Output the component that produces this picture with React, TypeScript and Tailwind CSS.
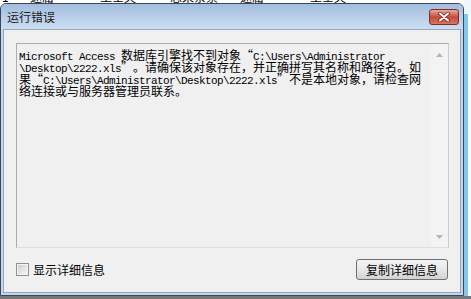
import React from "react";

const CJK = "font-['Noto_Sans_CJK_SC',sans-serif] text-[12px]";
const LAT = "font-['Liberation_Mono',monospace] text-[11px] tracking-[-0.6px]";

function L({ t }: { t: string }) {
  return <span className={LAT}>{t}</span>;
}
function C({ t }: { t: string }) {
  return <span className={CJK}>{t}</span>;
}
function LQ() {
  return <span className={`${CJK} inline-block w-[12px] text-right`}>“</span>;
}
function RQ() {
  return <span className={`${CJK} inline-block w-[12px] text-left`}>”</span>;
}

function Line({ children }: { children: React.ReactNode }) {
  return <div className="h-[12px] leading-[12px] whitespace-pre text-black">{children}</div>;
}

function Tri({ down }: { down?: boolean }) {
  return (
    <svg width="7" height="4" viewBox="0 0 7 4">
      {down ? <path d="M0 0 L7 0 L3.5 4 Z" fill="#b4b4b4" /> : <path d="M0 4 L7 4 L3.5 0 Z" fill="#b4b4b4" />}
    </svg>
  );
}

export default function App() {
  return (
    <div className="w-[471px] h-[299px] overflow-hidden bg-white flex flex-col">
      <div className="flex h-[296px]">
        <div className="w-[464px] flex flex-col">
          {/* background spreadsheet peeking above */}
          <div className="h-[3px] overflow-hidden">
            <div className={`-mt-[10px] flex leading-[14px] text-black ${CJK}`}>
              <span className="w-[30px] pl-[2px]">1</span>
              <span className="w-[70px]">速庸</span>
              <span className="w-[70px]">土士夫</span>
              <span className="w-[70px]">忠荣茶素</span>
              <span className="w-[70px]">速庸</span>
              <span className="w-[70px]">土士夫</span>
            </div>
          </div>
          {/* dialog window */}
          <div className="h-[293px] flex flex-col border border-[#3a475b] rounded-t-[6px] overflow-hidden bg-[#c6d7ec]">
            <div className="h-[25px] flex items-start justify-between bg-linear-to-b from-[#a2bddf] to-[#cddef1]">
              <span className={`${CJK} leading-[16px] mt-[5px] ml-[6px] text-[#1b1b1b]`}>运行错误</span>
              <div className="mt-[5px] mr-[4px] w-[30px] h-[16px] rounded-[3px] border border-[#7a3026] bg-linear-to-b from-[#e9ab9c] via-[#c6493a] to-[#d8735f] flex items-center justify-center">
                <svg width="12" height="10" viewBox="0 0 12 10">
                  <path d="M2 1.5 L10 8.5 M10 1.5 L2 8.5" stroke="#6b2219" strokeWidth="3.6" strokeLinecap="round" />
                  <path d="M2 1.5 L10 8.5 M10 1.5 L2 8.5" stroke="#ffffff" strokeWidth="2" strokeLinecap="round" />
                </svg>
              </div>
            </div>
            <div className="flex-1 px-[2px] pb-[2px] flex flex-col">
              <div className="flex-1 border border-[#93a7c0] bg-[#f0f0f0] pt-[13px] pl-[12px] pr-[11px] flex flex-col">
                <div className="h-[205px] border border-[#abadb3] border-b-[#dcdfe3] border-r-[#c8ccd1] bg-[#f0f0f0] flex">
                  <div className="flex-1 pl-[2px] pt-[4px]">
                    <Line>
                      <L t="Microsoft Access " />
                      <C t="数据库引擎找不到对象" />
                      <LQ />
                      <L t="C:\Users\Administrator" />
                    </Line>
                    <Line>
                      <L t="\Desktop\2222.xls" />
                      <RQ />
                      <C t="。请确保该对象存在，并正确拼写其名称和路径名。如" />
                    </Line>
                    <Line>
                      <C t="果" />
                      <LQ />
                      <L t="C:\Users\Administrator\Desktop\2222.xls" />
                      <RQ />
                      <C t="不是本地对象，请检查网" />
                    </Line>
                    <Line>
                      <C t="络连接或与服务器管理员联系。" />
                    </Line>
                  </div>
                  <div className="w-[17px] flex flex-col items-center justify-between pt-[9px] pb-[8px] bg-[#f3f3f3]">
                    <Tri />
                    <Tri down />
                  </div>
                </div>
                <div className="mt-[11px] h-[21px] flex items-center justify-between">
                  <div className="flex items-center gap-[4px]">
                    <div className="w-[13px] h-[13px] border border-[#8e8f8f] bg-[#f4f4f4] p-[1px]">
                      <div className="w-full h-full bg-linear-to-br from-[#cfcfcf] to-[#f6f6f6]" />
                    </div>
                    <span className={`${CJK} leading-[14px] text-black`}>显示详细信息</span>
                  </div>
                  <div className="mr-[1px] w-[92px] h-[21px] rounded-[3px] border border-[#707070] bg-linear-to-b from-[#f4f4f4] via-[#e8e8e8] to-[#d2d2d2] flex items-center justify-center">
                    <span className={`${CJK} leading-[14px] text-black`}>复制详细信息</span>
                  </div>
                </div>
              </div>
            </div>
          </div>
        </div>
        {/* window behind on the right */}
        <div className="flex-1 flex flex-col">
          <div className="h-[14px] bg-[#eef7fb]" />
          <div className="flex-1 flex">
            <div className="w-[4px] bg-[#86c6e8]" />
            <div className="flex-1 bg-[#f7fbfd]" />
          </div>
        </div>
      </div>
      <div className="h-[3px] bg-[#777777]" />
    </div>
  );
}
